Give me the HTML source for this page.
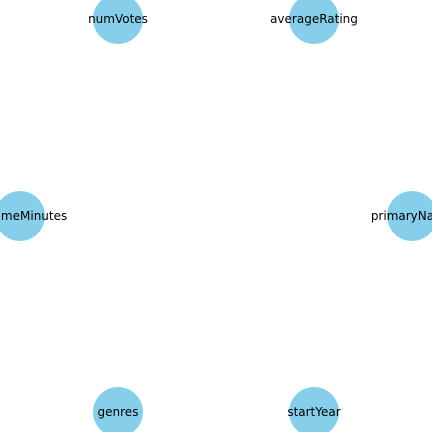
<!DOCTYPE html>
<html><head><style>html,body{margin:0;padding:0;background:#fff;overflow:hidden;width:432px;height:432px}</style></head>
<body>
<svg width="432" height="432" xmlns="http://www.w3.org/2000/svg" style="display:block">
<g fill="#87ceeb">
<circle cx="118" cy="19" r="25"/>
<circle cx="314" cy="19" r="25"/>
<circle cx="20" cy="216" r="25"/>
<circle cx="412" cy="216" r="25"/>
<circle cx="118" cy="412" r="25"/>
<circle cx="314" cy="412" r="25"/>
</g>
<g font-family="DejaVu Sans, sans-serif" font-size="12" fill="#000" text-anchor="middle" dominant-baseline="central">
<text x="118" y="19">numVotes</text>
<text x="314" y="19">averageRating</text>
<text x="20" y="216">runtimeMinutes</text>
<text x="412" y="216">primaryName</text>
<text x="118" y="412">genres</text>
<text x="314" y="412">startYear</text>
</g>
</svg>
</body></html>
